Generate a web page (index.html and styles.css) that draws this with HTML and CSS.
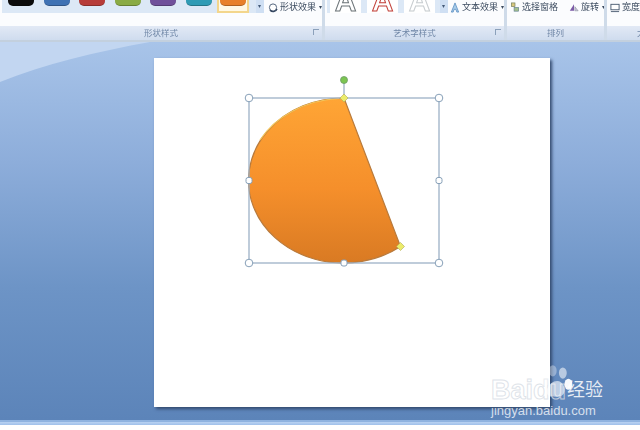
FILE: index.html
```html
<!DOCTYPE html>
<html lang="zh-CN">
<head>
  <meta charset="UTF-8">
  <title>形状样式</title>
  <link rel="stylesheet" href="styles.css">
</head>
<body>

  <div class="ribbon">
    <section class="grupo grupo-forma">
      <div class="cuerpo">
        <div class="galeria galeria-forma">
          <span class="muestra negro"></span>
          <span class="muestra azul"></span>
          <span class="muestra rojo"></span>
          <span class="muestra verde"></span>
          <span class="muestra morado"></span>
          <span class="muestra turquesa"></span>
          <span class="marco"><span class="muestra naranja"></span></span>
        </div>
        <span class="scroll">▾</span>
        <span class="comando comando-efecto">
          <svg class="icono" viewBox="0 0 10 10"><circle cx="5" cy="5" r="3.6" fill="#fff" stroke="#56677f"/><path d="M2 7.5a4 4 0 0 0 7-1" fill="none" stroke="#34465f" stroke-width="1.4"/></svg>
          形状效果 <i>▾</i>
        </span>
      </div>
      <div class="etiqueta">形状样式<span class="lanzador"></span></div>
    </section>

    <section class="grupo grupo-arte">
      <div class="cuerpo">
        <div class="galeria galeria-arte">
          <span class="letra gris">A</span>
          <span class="letra roja">A</span>
          <span class="letra clara">A</span>
        </div>
        <span class="scroll">▾</span>
        <span class="comando comando-texto">
          <svg class="icono" viewBox="0 0 10 12"><path d="M1 11 5 1l4 10H7L6 8H4l-1 3z" fill="#a9cdea" stroke="#4f87bd" stroke-width=".8"/></svg>
          文本效果 <i>▾</i>
        </span>
      </div>
      <div class="etiqueta">艺术字样式<span class="lanzador"></span></div>
    </section>

    <section class="grupo grupo-orden">
      <div class="cuerpo">
        <span class="comando">
          <svg class="icono" viewBox="0 0 10 12"><rect x="1" y="1" width="4" height="4" fill="#d9c77d" stroke="#6d7a5a" stroke-width=".7"/><rect x="4" y="6" width="5" height="4" fill="#a4c08c" stroke="#5f7e8e" stroke-width=".7"/></svg>
          选择窗格
        </span>
        <span class="comando comando-giro">
          <svg class="icono" viewBox="0 0 12 10"><path d="M1 9 6 1v8z" fill="#7b5aa6"/><path d="M7 9V4l4 5z" fill="#c9c2d8" stroke="#67727f" stroke-width=".5"/></svg>
          旋转 <i>▾</i>
        </span>
      </div>
      <div class="etiqueta">排列</div>
    </section>

    <section class="grupo grupo-tamano">
      <div class="cuerpo">
        <span class="comando">
          <svg class="icono" viewBox="0 0 11 11"><rect x="1" y="2" width="9" height="6" fill="#fff" stroke="#47586e"/><path d="M1 10h9" stroke="#47586e"/></svg>
          宽度:
        </span>
      </div>
      <div class="etiqueta etiqueta-corta">大小</div>
    </section>
  </div>

  <main class="escritorio">
    <svg class="brillo" viewBox="0 0 640 60" preserveAspectRatio="none">
      <path d="M0 0H150C95 10 45 22 0 40z" fill="#c2d6f1"/>
    </svg>

    <div class="pagina">
      <svg class="lienzo" viewBox="154 58 396 349">
        <defs>
          <linearGradient id="relleno" x1="0" y1="0" x2="0" y2="1">
            <stop offset="0" stop-color="#ffa535"/>
            <stop offset=".55" stop-color="#f58f2b"/>
            <stop offset="1" stop-color="#d97a23"/>
          </linearGradient>
        </defs>
        <path d="M344 98A95 82.5 0 1 0 400.500 246.500Z" fill="url(#relleno)" stroke="#b87a3c" stroke-width="1.200"/>
        <path d="M339 98.500C305 100 275 117 260 140" fill="none" stroke="#f6c75a" stroke-width="1.200"/>

        <rect class="caja" x="249" y="98" width="190" height="165"/>
        <path class="caja" d="M344 80V98"/>
        <circle class="giro" cx="344" cy="80" r="3.500"/>

        <circle class="asa" cx="249" cy="98" r="3.800"/>
        <circle class="asa" cx="439" cy="98" r="3.800"/>
        <circle class="asa" cx="249" cy="263" r="3.800"/>
        <circle class="asa" cx="439" cy="263" r="3.800"/>
        <rect class="asa" x="246" y="177.500" width="6" height="6" rx="2"/>
        <rect class="asa" x="436" y="177.500" width="6" height="6" rx="2"/>
        <rect class="asa" x="341" y="260" width="6" height="6" rx="2"/>

        <path class="rombo" d="M344 94 348 98 344 102 340 98Z"/>
        <path class="rombo" d="M400.500 242.500 404.500 246.500 400.500 250.500 396.500 246.500Z"/>
      </svg>
    </div>

    <div class="marca">
      <div class="marca-fila">
        <span class="marca-bai">Bai</span><span class="marca-du">du</span>
        <svg class="pata" viewBox="0 0 34 34">
          <ellipse cx="8" cy="16" rx="3.500" ry="5" fill="#fff" fill-opacity=".35"/>
          <ellipse cx="15" cy="7" rx="3.500" ry="5" fill="#fff" fill-opacity=".35"/>
          <ellipse cx="24" cy="9" rx="3.500" ry="5" fill="#fff" fill-opacity=".55"/>
          <ellipse cx="29" cy="19" rx="3.500" ry="5" fill="#fff" fill-opacity=".95"/>
          <path d="M19 16c5 0 8 7 6 11s-8 3-11 3-6-3-4-7 5-7 9-7z" fill="#fff" fill-opacity=".6"/>
        </svg>
        <span class="marca-cn">经验</span>
      </div>
      <div class="marca-url">jingyan.baidu.com</div>
    </div>
  </main>

  <footer class="pie"></footer>

</body>
</html>
```

FILE: styles.css
```css
html, body {
  margin: 0;
  height: 100%;
}

body {
  width: 640px;
  height: 430px;
  display: flex;
  flex-direction: column;
  overflow: hidden;
  font-family: "Noto Sans CJK SC", "Liberation Sans", sans-serif;
  background: #fff;
}

/* cinta superior */
.ribbon {
  height: 42px;
  flex: none;
  display: flex;
  gap: 3px;
  background: #cfdbe9;
  filter: blur(0.35px);
  border-bottom: 2px solid #c3d0de;
  box-sizing: border-box;
}

.grupo {
  display: flex;
  flex-direction: column;
  background: #fbfcfe;
  overflow: hidden;
}

.grupo-forma { width: 322px; }
.grupo-arte { width: 179px; }
.grupo-orden { width: 97px; }
.grupo-tamano { flex: 1; }

.cuerpo {
  height: 26px;
  display: flex;
  align-items: flex-start;
  color: #3d4c60;
  font-size: 9px;
  line-height: 12px;
  white-space: nowrap;
}

.etiqueta {
  height: 14px;
  position: relative;
  text-align: center;
  font-size: 8.500px;
  line-height: 13px;
  color: #6f86a6;
  background: linear-gradient(#e2e9f5, #cfdcee);
}

.etiqueta-corta {
  text-align: left;
  padding-left: 30px;
}

.lanzador {
  position: absolute;
  right: 3px;
  top: 3px;
  width: 5px;
  height: 5px;
  border: 1px solid #8ba0ba;
  border-width: 1px 0 0 1px;
}

.galeria {
  height: 13px;
  display: flex;
  background: #dce8f6;
}

.galeria-forma {
  width: 254px;
  margin-left: 2px;
  padding-left: 6px;
  gap: 9.500px;
  box-sizing: border-box;
}

.muestra {
  width: 26px;
  height: 5px;
  border-radius: 0 0 5px 5px;
  border-bottom: 1px solid rgba(0, 0, 0, 0.25);
}

.negro { background: #0b0b0b; }
.azul { background: #3f72b4; }
.rojo { background: #b73c39; }
.verde { background: #8aab45; }
.morado { background: #70509b; }
.turquesa { background: #2f9bb5; }
.naranja { background: #e8802a; display: block; }

.marco {
  width: 32px;
  height: 13px;
  margin-left: -4px;
  display: flex;
  justify-content: center;
  background: #fff8e4;
  border: 2px solid #f3d68c;
  border-top: 0;
  box-sizing: border-box;
}

.scroll {
  width: 8px;
  height: 13px;
  font-size: 6px;
  line-height: 12px;
  text-align: center;
  color: #445a78;
  background: #cfdff3;
}

.comando {
  display: inline-flex;
  align-items: center;
  gap: 2px;
  height: 14px;
}

.comando i {
  font-style: normal;
  font-size: 6px;
  margin-left: 1px;
}

.icono {
  width: 10px;
  height: 11px;
  flex: none;
}

.comando-efecto { margin-left: 4px; }
.comando-texto { margin-left: 2px; }
.comando-giro { margin-left: 11px; }

.grupo-orden .comando:first-child,
.grupo-tamano .comando:first-child { margin-left: 3px; }

.grupo-forma .comando,
.grupo-arte .comando { padding-top: 0; }

.galeria-arte {
  width: 110px;
  margin-left: 2px;
  padding-left: 3px;
  gap: 6px;
  overflow: hidden;
}

.letra {
  width: 31px;
  height: 13px;
  display: flex;
  align-items: flex-end;
  justify-content: center;
  background: #fff;
  font-family: "Liberation Sans", sans-serif;
  font-size: 30px;
  font-weight: bold;
  line-height: 24px;
  color: #fff;
  -webkit-text-stroke: 1px #6c7478;
}

.roja { -webkit-text-stroke-color: #c2413a; }
.clara { -webkit-text-stroke-color: #c8cdd0; }

/* zona de trabajo */
.escritorio {
  flex: 1;
  position: relative;
  padding: 16px 0 0 154px;
  background: linear-gradient(#a8c4e9 0%, #8dadda 32%, #6d94c6 65%, #5c84b9 100%);
}

.brillo {
  position: absolute;
  left: 0;
  top: 0;
  width: 640px;
  height: 60px;
}

.pagina {
  position: relative;
  width: 396px;
  height: 349px;
  background: #fff;
  box-shadow: 2px 2px 3px #33496e;
}

.lienzo {
  display: block;
  width: 396px;
  height: 349px;
}

.caja {
  fill: none;
  stroke: #9db1c7;
  stroke-width: 1.300;
}

.asa {
  fill: #fff;
  stroke: #87a0b8;
  stroke-width: 1;
}

.giro {
  fill: #7cc551;
  stroke: #6f9d68;
  stroke-width: 0.800;
}

.rombo {
  fill: #ecec6a;
  stroke: #b0aa5a;
  stroke-width: 0.600;
}

/* marca de agua */
.marca {
  position: absolute;
  left: 491px;
  top: 332px;
  width: 120px;
  color: #fff;
}

.marca-fila {
  display: flex;
  align-items: flex-end;
  height: 30px;
  position: relative;
  font-family: "Liberation Sans", sans-serif;
}

.marca-bai,
.marca-du {
  font-size: 27px;
  font-weight: bold;
  line-height: 28px;
  color: transparent;
  -webkit-text-stroke: 1px rgba(214, 220, 228, 0.8);
}

.pata {
  position: absolute;
  left: 45px;
  top: -11px;
  width: 38px;
  height: 38px;
}

.marca-cn {
  position: absolute;
  left: 76px;
  top: 2px;
  font-family: "Noto Sans CJK SC", sans-serif;
  font-size: 18px;
  line-height: 24px;
  color: rgba(255, 255, 255, 0.85);
}

.marca-url {
  font-family: "Liberation Sans", sans-serif;
  font-size: 13px;
  line-height: 15px;
  margin-top: -1px;
  color: rgba(255, 255, 255, 0.75);
}

.pie {
  height: 10px;
  flex: none;
  background: linear-gradient(#8fb3e0 0, #8fb3e0 2px, #b9d2f2 2px, #9fc0ea 5px, #fff 5px);
}
```
